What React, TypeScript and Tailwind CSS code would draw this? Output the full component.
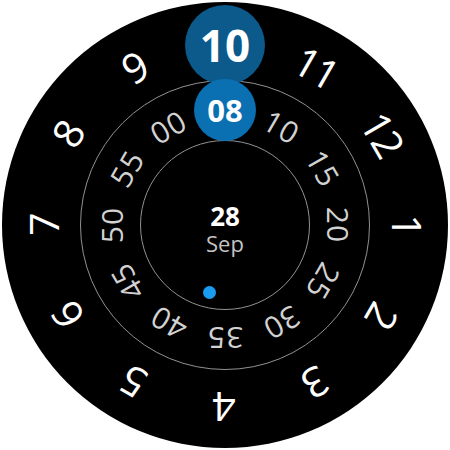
const HOURS = [11, 12, 1, 2, 3, 4, 5, 6, 7, 8, 9];
const MINUTES = ["00", "10", "15", "20", "25", "30", "35", "40", "45", "50", "55"];

function RingLabel({
  label,
  angle,
  radius,
  className,
}: {
  label: string;
  angle: number;
  radius: number;
  className: string;
}) {
  return (
    <div
      className={`absolute left-1/2 top-1/2 leading-none whitespace-nowrap ${className}`}
      style={{
        transform: `translate(-50%, -50%) rotate(${angle}deg) translateY(-${radius}px)`,
      }}
    >
      {label}
    </div>
  );
}

export default function App() {
  return (
    <div
      className="flex h-[450px] w-[450px] items-center justify-center overflow-hidden bg-white"
      style={{ fontFamily: '"Open Sans", "Noto Sans", sans-serif' }}
    >
      {/* watch face */}
      <div className="relative flex h-[446px] w-[446px] items-center justify-center rounded-full bg-black">
        {/* rings */}
        <div className="flex h-[290px] w-[290px] items-center justify-center rounded-full border-[1.5px] border-[#929292]">
          <div className="flex h-[170px] w-[170px] flex-col items-center rounded-full border-[1.5px] border-[#929292] pt-[62px] leading-none">
            <span className="text-[26px] font-bold text-white">28</span>
            <span className="mt-[3px] text-[22px] text-[#c4c4c4]">Sep</span>
            <span className="ml-[-32px] mt-[32px] h-[13px] w-[13px] rounded-full bg-[#1a9cf0]" />
          </div>
        </div>

        {HOURS.map((h) => (
          <RingLabel
            key={h}
            label={String(h)}
            angle={(h - 10) * 30}
            radius={182}
            className="text-[41px] font-normal tracking-[-2px] text-white"
          />
        ))}

        {MINUTES.map((m) => (
          <RingLabel
            key={m}
            label={m}
            angle={((Number(m) - 5) / 5) * 30}
            radius={113}
            className="text-[30px] font-normal tracking-[1px] text-[#d2d2d2]"
          />
        ))}

        {/* selected hour */}
        <div className="absolute left-[183px] top-[3px] flex h-[80px] w-[80px] items-center justify-center rounded-full bg-[#0c5a8b]">
          <span className="text-[44px] font-bold leading-none text-white">10</span>
        </div>
        {/* selected minute */}
        <div className="absolute left-[192px] top-[77px] flex h-[62px] w-[62px] items-center justify-center rounded-full bg-[#0a70b2]">
          <span className="text-[31px] font-bold leading-none text-white">08</span>
        </div>
      </div>
    </div>
  );
}
